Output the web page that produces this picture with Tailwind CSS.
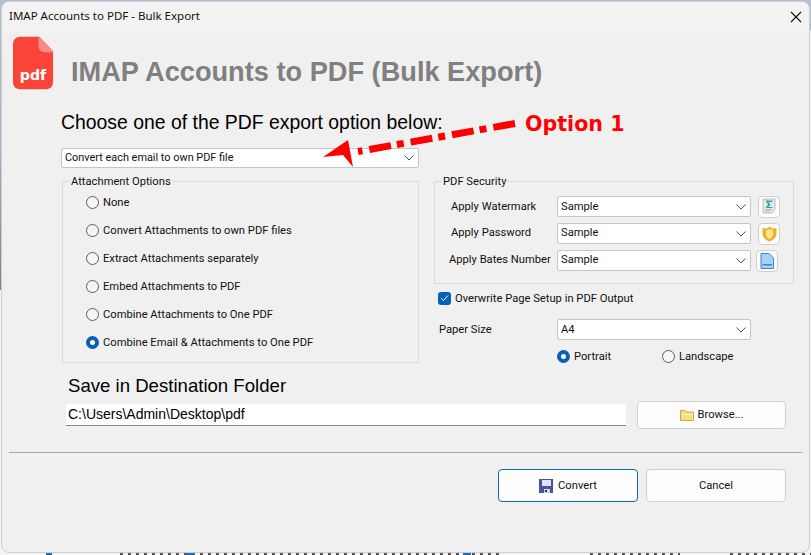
<!DOCTYPE html>
<html lang="en">
<head>
    <meta charset="UTF-8">
    <title>IMAP Accounts to PDF - Bulk Export</title>
    <script src="https://cdn.jsdelivr.net/npm/@tailwindcss/browser@4"></script>
</head>
<body class="w-[811px] h-[555px] overflow-hidden bg-[#f4f4f5] relative">

<!-- desktop behind the dialog -->
<div class="absolute inset-x-0 top-0 h-[30px] bg-[#b4bfd6]"></div>
<div class="absolute left-0 top-0 w-[2px] h-[290px] bg-linear-to-b from-[#b4bfd6] via-[#a9b2c8] to-[#8e7f78]"></div>
<svg class="absolute left-0 bottom-0" width="811" height="3" fill="none">
    <path d="M120 2H500M590 2H680M730 2H1000" stroke="#555" stroke-width="2" stroke-dasharray="3 5"/>
    <path d="M46 2H52M187 2H195M463 2H471" stroke="#1f6fb5" stroke-width="2"/>
</svg>

<div class="absolute left-px top-px w-[809px] h-[552px] rounded-lg bg-[#f0f0f0] border border-[#cfcfd1] overflow-hidden font-['Roboto',sans-serif] text-[11.2px] text-[#111]">

    <!-- title bar -->
    <div class="h-[30px] bg-[#f3f3f3] flex items-center justify-between pl-[7px] pr-[7px]">
        <span class="-translate-y-px font-['Noto_Sans',sans-serif] text-[11.5px]">IMAP Accounts to PDF - Bulk Export</span>
        <svg class="w-[12px] h-[12px]" viewBox="0 0 12 12" fill="none" stroke="#111" stroke-width="1.1"><path d="M1 1l10 10M11 1L1 11"/></svg>
    </div>

    <!-- header -->
    <div class="flex pl-[11px] h-[60px]">
        <svg class="w-[41px] h-[55px] mt-[4px] shrink-0" viewBox="0 0 42 55">
            <path d="M7 0H27L41 15V47a7 7 0 0 1-7 7H7a7 7 0 0 1-7-7V7a7 7 0 0 1 7-7z" fill="#fb4438"/>
            <path d="M26 0h1L41 15v1H32a6 6 0 0 1-6-6z" fill="#fd8a84"/>
            <text x="20.5" y="44" text-anchor="middle" fill="#fff" font-family="'DejaVu Sans',sans-serif" font-weight="700" font-size="14.5">pdf</text>
        </svg>
        <h1 class="ml-[17px] mt-[22px] font-['Liberation_Sans',sans-serif] font-bold text-[27.2px] leading-[36px] text-[#808080] whitespace-nowrap">IMAP Accounts to PDF (Bulk Export)</h1>
    </div>

    <div class="pl-[59px]">
        <p class="mt-[18px] font-['Liberation_Sans',sans-serif] text-[19.4px] leading-[24px] text-black">Choose one of the PDF export option below:</p>

        <!-- export option -->
        <div class="mt-[14px] w-[358px] h-[20px] bg-white border border-[#c6c6c6] rounded-[2px] flex items-center justify-between pl-[3px] pr-[3px]">
            <span class="text-[10.9px]">Convert each email to own PDF file</span>
            <svg class="w-[12px] h-[8px]" viewBox="0 0 12 8" fill="none" stroke="#555"><path d="M1.5 1.5L6 6l4.5-4.5"/></svg>
        </div>

        <div class="flex mt-[6px]">
            <!-- attachment options -->
            <fieldset class="ml-px w-[357px] h-[189px] border border-[#dadada] flex flex-col">
                <legend class="ml-[7px] px-px leading-[14px] translate-y-px">Attachment Options</legend>
                <div class="flex flex-col gap-[12px] pl-[23px] pt-[6px]">
                    <label class="flex items-center h-[16px] gap-[4px]"><span class="w-[13px] h-[13px] rounded-full border border-[#5c5c5c] bg-[#f6f6f6]"></span><span class="translate-y-px">None</span></label>
                    <label class="flex items-center h-[16px] gap-[4px]"><span class="w-[13px] h-[13px] rounded-full border border-[#5c5c5c] bg-[#f6f6f6]"></span><span class="translate-y-px">Convert Attachments to own PDF files</span></label>
                    <label class="flex items-center h-[16px] gap-[4px]"><span class="w-[13px] h-[13px] rounded-full border border-[#5c5c5c] bg-[#f6f6f6]"></span><span class="translate-y-px">Extract Attachments separately</span></label>
                    <label class="flex items-center h-[16px] gap-[4px]"><span class="w-[13px] h-[13px] rounded-full border border-[#5c5c5c] bg-[#f6f6f6]"></span><span class="translate-y-px">Embed Attachments to PDF</span></label>
                    <label class="flex items-center h-[16px] gap-[4px]"><span class="w-[13px] h-[13px] rounded-full border border-[#5c5c5c] bg-[#f6f6f6]"></span><span class="translate-y-px">Combine Attachments to One PDF</span></label>
                    <label class="flex items-center h-[16px] gap-[4px]"><span class="w-[13px] h-[13px] rounded-full border-[4px] border-[#0560b6] bg-white"></span><span class="translate-y-px">Combine Email &amp; Attachments to One PDF</span></label>
                </div>
            </fieldset>

            <div class="ml-[15px] w-[360px]">
                <!-- pdf security -->
                <fieldset class="w-[360px] h-[110px] border border-[#dadada]">
                    <legend class="ml-[7px] px-px leading-[14px] translate-y-px">PDF Security</legend>
                    <div class="flex flex-col gap-[6px] pt-[8px]">
                        <div class="flex items-center h-[21px]">
                            <span class="w-[122px] pl-[16px] shrink-0 translate-y-px">Apply Watermark</span>
                            <div class="w-[194px] h-[21px] bg-white border border-[#c6c6c6] rounded-[2px] flex items-center justify-between pl-[3px] pr-[3px]">
                                <span class="translate-y-px">Sample</span>
                                <svg class="w-[12px] h-[8px]" viewBox="0 0 12 8" fill="none" stroke="#555"><path d="M1.5 1.5L6 6l4.5-4.5"/></svg>
                            </div>
                            <button class="ml-[7px] w-[22px] h-[22px] bg-[#fdfdfd] border border-[#d0d0d0] rounded-[4px] flex items-center justify-center">
                                <svg class="w-[16px] h-[17px]" viewBox="0 0 16 17"><path d="M2 1h12v10l-3 4H2z" fill="#e6eae8" stroke="#aab2b0" stroke-width=".8"/><path d="M4 13h5M4 11.500h7" stroke="#9aa3a1" stroke-width=".7"/><path d="M4.500 2.500h7v1.500H7.500l2 2.500-2 2.500h4V10h-7l2.500-3.500z" fill="#2fa6ad"/></svg>
                            </button>
                        </div>
                        <div class="flex items-center h-[21px]">
                            <span class="w-[122px] pl-[16px] shrink-0">Apply Password</span>
                            <div class="w-[194px] h-[21px] bg-white border border-[#c6c6c6] rounded-[2px] flex items-center justify-between pl-[3px] pr-[3px]">
                                <span>Sample</span>
                                <svg class="w-[12px] h-[8px]" viewBox="0 0 12 8" fill="none" stroke="#555"><path d="M1.5 1.5L6 6l4.5-4.5"/></svg>
                            </div>
                            <button class="ml-[7px] w-[22px] h-[22px] bg-[#fdfdfd] border border-[#d0d0d0] rounded-[4px] flex items-center justify-center">
                                <svg class="w-[15px] h-[16px]" viewBox="0 0 15 16"><path d="M7.5 .5l2.5 2 4.5-.5v6c0 3.5-3.5 6-7 7.500-3.500-1.500-7-4-7-7.500V2l4.500.5z" fill="#eeb02c"/><path d="M7.500 3l3.500 1.500v4c0 2-1.700 3.600-3.500 4.500-1.800-.9-3.500-2.500-3.500-4.500v-4z" fill="#fbe48a"/></svg>
                            </button>
                        </div>
                        <div class="flex items-center h-[21px]">
                            <span class="w-[122px] pl-[14px] shrink-0 whitespace-nowrap">Apply Bates Number</span>
                            <div class="w-[194px] h-[21px] bg-white border border-[#c6c6c6] rounded-[2px] flex items-center justify-between pl-[3px] pr-[3px]">
                                <span>Sample</span>
                                <svg class="w-[12px] h-[8px]" viewBox="0 0 12 8" fill="none" stroke="#555"><path d="M1.5 1.5L6 6l4.5-4.5"/></svg>
                            </div>
                            <button class="ml-[5px] w-[22px] h-[22px] bg-[#fdfdfd] border border-[#d0d0d0] rounded-[4px] flex items-center justify-center">
                                <svg class="w-[14px] h-[16px]" viewBox="0 0 14 16"><path d="M1 .5h8l4.500 4.500v10.500H1z" fill="#a9d0f5" stroke="#3c84d6"/><path d="M2.500 11h9.500v1.500H2.500z" fill="#3c84d6"/></svg>
                            </button>
                        </div>
                    </div>
                </fieldset>

                <label class="flex items-center ml-[4px] mt-[7px] h-[14px] gap-[4px]">
                    <span class="w-[13px] h-[13px] rounded-[3px] bg-[#0560b6] flex items-center justify-center">
                        <svg class="w-[9px] h-[8px]" viewBox="0 0 9 8" fill="none" stroke="#fff"><path d="M1 4l2.500 2.500L8 1.500"/></svg>
                    </span>
                    <span class="translate-y-px">Overwrite Page Setup in PDF Output</span>
                </label>

                <div class="flex items-center mt-[14px] h-[21px]">
                    <span class="w-[123px] pl-[5px] shrink-0 translate-y-px">Paper Size</span>
                    <div class="w-[194px] h-[21px] bg-white border border-[#c6c6c6] rounded-[2px] flex items-center justify-between pl-[3px] pr-[3px]">
                        <span class="translate-y-px">A4</span>
                        <svg class="w-[12px] h-[8px]" viewBox="0 0 12 8" fill="none" stroke="#555"><path d="M1.5 1.5L6 6l4.5-4.5"/></svg>
                    </div>
                </div>
                <div class="flex items-center ml-[123px] mt-[8px] h-[16px]">
                    <label class="flex items-center gap-[4px] w-[105px]"><span class="w-[13px] h-[13px] rounded-full border-[4px] border-[#0560b6] bg-white"></span><span class="translate-y-px">Portrait</span></label>
                    <label class="flex items-center gap-[4px]"><span class="w-[13px] h-[13px] rounded-full border border-[#5c5c5c] bg-[#f6f6f6]"></span><span class="translate-y-px">Landscape</span></label>
                </div>
            </div>
        </div>
    </div>

    <!-- destination -->
    <div class="pl-[64px]">
        <p class="ml-[2px] mt-[10px] font-['Liberation_Sans',sans-serif] text-[18.6px] leading-[24px] text-black">Save in Destination Folder</p>
        <div class="flex items-center mt-[3px]">
            <div class="w-[560px] h-[22px] bg-white border-b border-[#8a8a8a] pl-[2px] font-['Liberation_Sans',sans-serif] text-[14px] leading-[21px] text-black">C:\Users\Admin\Desktop\pdf</div>
            <button class="ml-[11px] w-[149px] h-[28px] bg-[#fdfdfd] border border-[#d0d0d0] rounded-[4px] flex items-center justify-center gap-[4px]">
                <svg class="w-[14px] h-[12px]" viewBox="0 0 14 12"><path d="M.5 1.500h4.500l1 1.500h7.500v8.500H.5z" fill="#f9dc86" stroke="#d5a24a"/><path d="M1.500 5h11.500v1H1.500z" fill="#fff3c4"/></svg>
                Browse...
            </button>
        </div>
    </div>

    <div class="mx-[7px] mt-[23px] h-px bg-[#a8a8a8]"></div>

    <!-- actions -->
    <div class="flex justify-end gap-2 pr-[23px] mt-[16px]">
        <button class="w-[140px] h-[33px] bg-[#fdfdfd] border border-[#0a6cc0] rounded-[4px] flex items-center justify-center gap-[5px]">
            <svg class="w-[14px] h-[14px]" viewBox="0 0 14 14"><path d="M0 0h14v14H0z" fill="#4a4fa8"/><path d="M3 1h9v6H3z" fill="#dfe3f5"/><path d="M5 10h6v4H5z" fill="#d8d8d8"/><path d="M6 11h2v2H6z" fill="#333"/></svg>
            <span class="translate-y-px">Convert</span>
        </button>
        <button class="w-[140px] h-[33px] bg-[#fdfdfd] border border-[#d0d0d0] rounded-[4px]"><span class="block translate-y-px">Cancel</span></button>
    </div>
</div>

<!-- callout drawn over the dialog -->
<svg class="absolute left-0 top-0 pointer-events-none" width="811" height="555" fill="none">
    <path d="M515 123.500L358 151.500" stroke="#ff0000" stroke-width="7" stroke-dasharray="22 7 7 6"/>
    <path d="M323 157L348 140L353 167L343 155Z" fill="#ff0000"/>
</svg>
<span class="absolute left-[525px] top-[110px] font-['DejaVu_Sans',sans-serif] font-bold text-[20.6px] leading-[28px] text-[#ff0000] whitespace-nowrap">Option 1</span>

</body>
</html>
